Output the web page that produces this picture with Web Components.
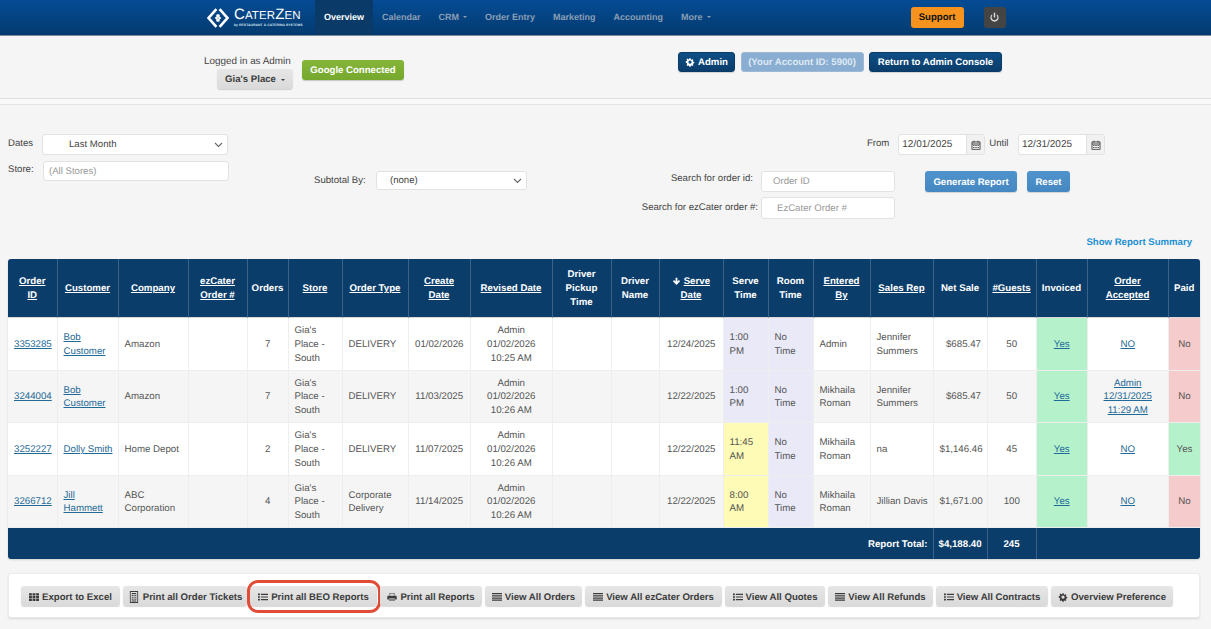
<!DOCTYPE html>
<html lang="en"><head><meta charset="utf-8"><title>CaterZen Overview</title>
<style>
html,body{margin:0;padding:0;background:#f5f5f5;font:9.8px/13.75px "Liberation Sans",Arial,sans-serif;color:#555;overflow:hidden;text-rendering:geometricPrecision}
body{height:629px}
</style></head><body>
<cz-navbar></cz-navbar>
<cz-account-bar></cz-account-bar>
<cz-filters></cz-filters>
<cz-report-table></cz-report-table>
<cz-action-bar></cz-action-bar>
<script>
const ICONS={
cog:'<path d="M6.7 1h2.6l.4 2 1.3.6 1.8-1.1 1.8 1.8-1.1 1.8.6 1.3 2 .4v2.6l-2 .4-.6 1.3 1.1 1.8-1.8 1.8-1.8-1.1-1.3.6-.4 2H6.7l-.4-2-1.3-.6-1.8 1.1-1.8-1.8 1.1-1.8L1.9 9.7l-2-.4V6.7l2-.4.6-1.3L1.4 3.2l1.8-1.8L5 2.5 6.3 3z" transform="translate(1.3 1.3) scale(.84)" fill-rule="evenodd"/><circle cx="8" cy="8" r="2.6" fill="var(--hole,#0d4a7f)"/>',
calendar:'<path d="M1.5 3h13v12h-13z" fill="none" stroke="currentColor" stroke-width="1.4"/><path d="M4 1h1.6v3.5H4zM10.4 1H12v3.5h-1.6zM1.5 5.5h13V7h-13z"/><path d="M3.5 8h2v1.6h-2zM7 8h2v1.6H7zM10.5 8h2v1.6h-2zM3.5 11h2v1.6h-2zM7 11h2v1.6H7zM10.5 11h2v1.6h-2z"/>',
th:'<path d="M0 2h4.6v3.4H0zM5.7 2h4.6v3.4H5.7zM11.4 2H16v3.4h-4.6zM0 6.4h4.6v3.4H0zM5.7 6.4h4.6v3.4H5.7zM11.4 6.4H16v3.4h-4.6zM0 10.8h4.6v3.4H0zM5.7 10.8h4.6v3.4H5.7zM11.4 10.8H16v3.4h-4.6z"/>',
list:'<path d="M0 2.5h3v2.6H0zM0 6.7h3v2.6H0zM0 10.9h3v2.6H0zM4.6 2.9H16v1.8H4.6zM4.6 7.1H16v1.8H4.6zM4.6 11.3H16v1.8H4.6z"/>',
bars:'<path d="M0 1.6h16v2H0zM0 5.1h16v2H0zM0 8.6h16v2H0zM0 12.1h16v2H0z"/>',
print:'<path d="M4 1.5h8v4H4zM5 2.5v3h6v-3z" fill-rule="evenodd"/><path d="M1.5 6h13a1 1 0 0 1 1 1v5h-3v-2h-9v2H.5V7a1 1 0 0 1 1-1z"/><path d="M4 10.8h8v3.7H4zM5 11.8v1.7h6v-1.7z" fill-rule="evenodd"/>',
ticket:'<path d="M2.5 0h11v16h-11zM3.6 1.2v13.6h8.8V1.2z" fill-rule="evenodd"/><path d="M5 2.5h6v1.5H5zM5 5h1.5v1.5H5zM7.3 5h1.5v1.5H7.3zM9.6 5h1.5v1.5H9.6zM5 7.5h1.5V9H5zM7.3 7.5h1.5V9H7.3zM9.6 7.5h1.5V9H9.6zM5 10h1.5v1.5H5zM7.3 10h1.5v1.5H7.3zM9.6 10h1.5v1.5H9.6zM5 12.5h6V14H5z"/>',
power:'<path d="M7 1h2v7H7z"/><path d="M4.6 3.1a6 6 0 1 0 6.8 0v2.3a4.1 4.1 0 1 1-6.8 0z"/>',
arrow:'<path d="M6.4 1.5h3.2v6.6l2.7-2.6 2.1 2.1L8 14 1.6 7.6l2.1-2.1 2.7 2.6z"/>'
};
customElements.define('cz-icon',class extends HTMLElement{connectedCallback(){
 const s=this.attachShadow({mode:'open'});const n=this.getAttribute('name');
 s.innerHTML=`<style>:host{display:inline-flex;width:var(--icon-size,10px);height:var(--icon-size,10px);vertical-align:-1.5px;flex:none}svg{width:100%;height:100%;fill:currentColor}</style><svg viewBox="0 0 16 16" aria-hidden="true">${ICONS[n]||''}</svg>`;
}});
customElements.define('cz-btn',class extends HTMLElement{connectedCallback(){
 const s=this.attachShadow({mode:'open'});
 s.innerHTML=`<style>
 :host{display:inline-flex;align-items:center;justify-content:center;gap:3px;box-sizing:border-box;height:20px;padding:1px 4px 0;border-radius:3px;font:bold 9.6px/13px "Liberation Sans",Arial,sans-serif;white-space:nowrap;flex:none;position:relative}
 :host([tone=grey]){background:linear-gradient(#e6e6e6,#dadada);color:#3c3c3c;box-shadow:0 1px 1px rgba(0,0,0,.16)}
 :host([tone=navy]){background:linear-gradient(#0e4e85,#0a3d6b);color:#fff;border:1px solid #0a3b68;box-shadow:0 1px 1px rgba(0,0,0,.15);--hole:#0d4a7f;padding-top:0}
 :host([tone=pale]){background:#8aaed2;color:#dfe9f3;border:1px solid #9db9d6;padding-top:0}
 :host([tone=green]){background:linear-gradient(#85b539,#76a82e);color:#fff;box-shadow:0 1px 1px rgba(0,0,0,.2);padding-top:0}
 :host([tone=blue]){background:linear-gradient(#4f93cd,#4588c1);color:#fff;box-shadow:0 1px 1px rgba(0,0,0,.15)}
 :host([tone=orange]){background:#f6931e;color:#111;padding-top:0}
 :host([tone=dark]){background:#444;color:#ddd;padding:0}
 :host([ring])::after{content:"";position:absolute;left:-3px;right:-4px;top:-6px;bottom:-7px;border:3px solid #e04c36;border-radius:11px;pointer-events:none}
 </style><slot></slot>`;
}});
customElements.define('cz-navbar',class extends HTMLElement{connectedCallback(){
 const s=this.attachShadow({mode:'open'});
 const items=[['Overview',0,1],['Calendar'],['CRM',1],['Order Entry'],['Marketing'],['Accounting'],['More',1]];
 s.innerHTML=`<style>
 :host{display:flex;box-sizing:border-box;height:36px;padding-left:207px;background:linear-gradient(#054b95,#033b6e);border-bottom:1px solid #7b8a99;font:bold 9px/14px "Liberation Sans",Arial,sans-serif}
 .logo{display:flex;align-items:center;gap:5px;width:108px;flex:none;color:#fff}
 .mark{width:22px;height:22px;flex:none}
 .word{display:flex;flex-direction:column;width:68px;font:400 11.5px/13px "Liberation Sans",Arial,sans-serif;letter-spacing:.1px;white-space:nowrap}
 .word b{font-weight:400;font-size:15px}
 .word small{font:bold 3.4px/4px "Liberation Sans",Arial,sans-serif;letter-spacing:.05px;color:#dfe8f1}
 nav{display:flex}
 a{display:flex;align-items:center;gap:3px;padding:0 9px 1px;color:#8b9fb4;white-space:nowrap}
 a.on{color:#fff;background:#0a3b68}
 i{width:0;height:0;border:2px solid transparent;border-top-color:currentColor;border-bottom:0;margin-left:1px}
 .right{display:flex;gap:20px;align-items:flex-start;padding-top:7px;margin-left:191px}
 </style>
 <div class="logo"><svg class="mark" viewBox="0 0 22 22" fill="none" stroke="#fff"><path d="M9.4 2.2 1.6 11l7.8 8.8" stroke-width="2.6"/><path d="M12.6 2.2l7.8 8.8-7.8 8.8" stroke-width="2.6"/><path d="M12.4 7.6 9 11l3.4 3.4M9.6 7.6 13 11l-3.4 3.4" stroke-width="1.8"/></svg>
 <div class="word"><span><b>C</b>ATER<b>Z</b>EN</span><small>by RESTAURANT &amp; CATERING SYSTEMS</small></div></div>
 <nav>${items.map(([t,c,on])=>`<a class="${on?'on':''}">${t}${c?'<i></i>':''}</a>`).join('')}</nav>
 <div class="right"><cz-btn tone="orange" style="width:53px;height:21px">Support</cz-btn><cz-btn tone="dark" style="width:22px;height:21px;--icon-size:11px"><cz-icon name="power"></cz-icon></cz-btn></div>`;
}});
customElements.define('cz-account-bar',class extends HTMLElement{connectedCallback(){
 const s=this.attachShadow({mode:'open'});
 s.innerHTML=`<style>
 :host{display:flex;box-sizing:border-box;height:69px;padding:16px 0 0 204px;background:linear-gradient(#f5f5f5 0,#f5f5f5 62px,#dedede 62px,#dedede 63px,#f9f9f9 63px,#f9f9f9 68px,#e4e4e4 68px);font:9.8px/14px "Liberation Sans",Arial,sans-serif;color:#444}
 .who{display:flex;flex-direction:column;margin-top:3px;width:89px;flex:none;font-size:9.9px;white-space:nowrap}
 .who cz-btn{margin:0 0 0 13px;width:76px}
 .gc{margin:8px 0 0 9px;width:102px}
 .ops{display:flex;gap:5.5px;margin-left:274px;align-items:flex-start}
 i{display:inline-block;width:0;height:0;border:2.5px solid transparent;border-top-color:currentColor;border-bottom:0;margin-left:2px;vertical-align:1.5px}
 </style>
 <div class="who"><span>Logged in as Admin</span><cz-btn tone="grey">Gia's Place<i></i></cz-btn></div>
 <cz-btn class="gc" tone="green">Google Connected</cz-btn>
 <div class="ops"><cz-btn tone="navy" style="width:57px"><cz-icon name="cog"></cz-icon>Admin</cz-btn><cz-btn tone="pale" style="width:123px">(Your Account ID: 5900)</cz-btn><cz-btn tone="navy" style="width:133px">Return to Admin Console</cz-btn></div>`;
}});
customElements.define('cz-filters',class extends HTMLElement{connectedCallback(){
 const s=this.attachShadow({mode:'open'});
 const chev='<svg width="9" height="6" viewBox="0 0 9 6" fill="none" stroke="#666" stroke-width="1.1"><path d="M1 1l3.5 3.5L8 1"/></svg>';
 const cal=v=>`<div class="date"><span>${v}</span><em><cz-icon name="calendar"></cz-icon></em></div>`;
 s.innerHTML=`<style>
 :host{display:block;height:154px;box-sizing:border-box;font:9.6px/14px "Liberation Sans",Arial,sans-serif;color:#444;white-space:nowrap}
 .top{display:flex;height:131px;padding-left:8px}
 .field{box-sizing:border-box;background:#fff;border:1px solid #e2e2e2;border-radius:3px;display:flex;align-items:center;justify-content:space-between;flex:none;padding-top:1px!important}
 .c1{width:221px;padding-top:29px;flex:none}
 .row{display:flex;align-items:center}
 .lab{position:relative;top:-1px}
 .ph{color:#999}
 .c2{margin-left:85px;padding-top:66px;flex:none}
 .c3{margin-left:115px;width:463px;flex:none;padding-top:29px}
 .dates{display:flex;justify-content:flex-end;align-items:center;height:21px}
 .date{display:flex;box-sizing:border-box;width:87px;height:21px;background:#fff;border:1px solid #e2e2e2;border-radius:3px;flex:none}
 .date span{flex:1;padding:3px 0 0 3px;font-size:10px}
 .date em{width:17px;background:#f1f1f1;border-left:1px solid #e2e2e2;display:flex;align-items:center;justify-content:center;color:#444;border-radius:0 3px 3px 0;--icon-size:10px}
 .search{display:flex;margin-top:16px}
 .labels{display:flex;flex-direction:column;align-items:flex-end;width:116px;flex:none}
 .labels span{display:flex;align-items:center;box-sizing:border-box}
 .inputs{margin-left:3px;width:134px;flex:none}
 .btns{display:flex;gap:10px;margin-left:30px;align-items:flex-start}
 .link{text-align:right;padding-right:19px;font-weight:bold;color:#1d90d2;line-height:14px;padding-top:0}
 </style>
 <div class="top">
  <div class="c1">
   <div class="row"><span class="lab" style="width:34px;flex:none">Dates</span><div class="field" style="width:186px;height:21px;padding:0 4px 0 26px"><span>Last Month</span>${chev}</div></div>
   <div class="row" style="margin-top:6px"><span class="lab" style="width:35px;flex:none">Store:</span><div class="field" style="width:186px;height:20px;padding:0 5px"><span class="ph">(All Stores)</span></div></div>
  </div>
  <div class="c2"><div class="row"><span class="lab" style="width:62px;flex:none;top:0">Subtotal By:</span><div class="field" style="width:151px;height:19px;padding:0 4px 0 13px"><span>(none)</span>${chev}</div></div></div>
  <div class="c3">
   <div class="dates"><span class="lab">From</span><span style="width:9px"></span>${cal('12/01/2025')}<span class="lab" style="margin:0 9.5px 0 4px">Until</span>${cal('12/31/2025')}</div>
   <div class="search">
    <div class="labels"><span style="height:21px;padding:0 5px 6px 0">Search for order id:</span><span style="height:22px;margin-top:5px">Search for ezCater order #:</span></div>
    <div class="inputs"><div class="field" style="height:21px;padding:0 11px"><span class="ph">Order ID</span></div><div class="field" style="height:22px;margin-top:5px;padding:0 15px"><span class="ph">EzCater Order #</span></div></div>
    <div class="btns"><cz-btn tone="blue" style="width:92px;height:21px">Generate Report</cz-btn><cz-btn tone="blue" style="width:43px;height:21px">Reset</cz-btn></div>
   </div>
  </div>
 </div>
 <div class="link">Show Report Summary</div>`;
}});
customElements.define('cz-report-table',class extends HTMLElement{connectedCallback(){
 const s=this.attachShadow({mode:'open'});
 const W=[49.5,61,70,59,41,54,66,62,82,59,48,64,45,45,57,63,54,49,51,81,31.5];
 const H=[['Order<br>ID',1],['Customer',1],['Company',1],['ezCater<br>Order #',1],['Orders'],['Store',1],['Order Type',1],['Create<br>Date',1],['Revised Date',1],['Driver<br>Pickup<br>Time'],['Driver<br>Name'],['SERVE',1],['Serve<br>Time'],['Room<br>Time'],['Entered<br>By',1],['Sales Rep',1],['Net Sale'],['#Guests',1],['Invoiced'],['Order<br>Accepted',1],['Paid']];
 const store="Gia's<br>Place -<br>South";
 const R=[
 ['3353285','Bob<br>Customer','Amazon','','7',store,'DELIVERY','01/02/2026','Admin<br>01/02/2026<br>10:25 AM','','','12/24/2025','1:00<br>PM','No<br>Time','Admin','Jennifer<br>Summers','$685.47','50','Yes','NO','No','l'],
 ['3244004','Bob<br>Customer','Amazon','','7',store,'DELIVERY','11/03/2025','Admin<br>01/02/2026<br>10:26 AM','','','12/22/2025','1:00<br>PM','No<br>Time','Mikhaila<br>Roman','Jennifer<br>Summers','$685.47','50','Yes','Admin<br>12/31/2025<br>11:29 AM','No','l'],
 ['3252227','Dolly Smith','Home Depot','','2',store,'DELIVERY','11/07/2025','Admin<br>01/02/2026<br>10:26 AM','','','12/22/2025','11:45<br>AM','No<br>Time','Mikhaila<br>Roman','na','$1,146.46','45','Yes','NO','Yes','y'],
 ['3266712','Jill<br>Hammett','ABC<br>Corporation','','4',store,'Corporate<br>Delivery','11/14/2025','Admin<br>01/02/2026<br>10:26 AM','','','12/22/2025','8:00<br>AM','No<br>Time','Mikhaila<br>Roman','Jillian Davis','$1,671.00','100','Yes','NO','No','y']];
 const align=['l','l','l','l','c','l','l','c','c','c','c','c','l','l','l','l','r','c','c','c','c'];
 const link=new Set([0,1,18,19]);
 s.innerHTML=`<style>
 :host{display:block;padding:0 11px 0 8px;font:9.7px/13.75px "Liberation Sans",Arial,sans-serif;color:#555}
 table{border-collapse:separate;border-spacing:0;table-layout:fixed;width:1192px;border-radius:3px;overflow:hidden;box-shadow:0 1px 2px rgba(0,0,0,.15)}
 th{background:#0b3d6b;color:#fff;font-weight:bold;height:59px;padding:2px 2px 0;box-sizing:border-box;text-align:center;border-right:1px solid #3b6389;border-bottom:1px solid #d8d8d8;vertical-align:middle}
 th:last-child,td:last-child{border-right:0}
 th u{text-decoration:underline}
 td{height:52.5px;box-sizing:border-box;padding:2px 5.5px 0 6px;border-right:1px solid #eee;border-bottom:1px solid #eee;background:#fff;vertical-align:middle;white-space:nowrap}
 tbody tr:nth-child(even) td{background:#f5f5f5}
 .l{text-align:left}.c{text-align:center}.r{text-align:right}
 a{color:#1f6a96;text-decoration:underline}
 tbody td.lav{background:#e9e9f7!important}
 tbody td.yel{background:#fdfbb6!important}
 tbody td.grn{background:#b5f2cc!important}
 tbody td.red{background:#f6cbcb!important}
 tfoot td{background:#0b3d6b;color:#fff;font-weight:bold;height:31px;border:0;border-right:1px solid #3b6389;padding:2px 5px 0}
 cz-icon{--icon-size:9px}
 </style>
 <table><colgroup>${W.map(w=>`<col style="width:${w}px">`).join('')}</colgroup>
 <thead><tr>${H.map(([t,u])=>t==='SERVE'?`<th><cz-icon name="arrow"></cz-icon> <u>Serve</u><br><u>Date</u></th>`:`<th>${u?t.split('<br>').map(x=>`<u>${x}</u>`).join('<br>'):t}</th>`).join('')}</tr></thead>
 <tbody>${R.map(r=>`<tr>${r.slice(0,21).map((v,i)=>{
   let c=align[i];
   if(i===12)c+=r[21]==='y'?' yel':' lav';
   if(i===13)c+=' lav';
   if(i===18)c+=' grn';
   if(i===20)c+=v==='Yes'?' grn':' red';
   return `<td class="${c}">${link.has(i)?`<a>${v}</a>`:v}</td>`}).join('')}</tr>`).join('')}</tbody>
 <tfoot><tr><td colspan="16" class="r">Report Total:</td><td class="r">$4,188.40</td><td class="c">245</td><td colspan="3"></td></tr></tfoot>
 </table>`;
}});
customElements.define('cz-action-bar',class extends HTMLElement{connectedCallback(){
 const s=this.attachShadow({mode:'open'});
 const B=[['th','Export to Excel',99],['ticket','Print all Order Tickets',124],['list','Print all BEO Reports',127],['print','Print all Reports',102],['bars','View All Orders',97],['bars','View All ezCater Orders',137],['list','View All Quotes',100],['bars','View All Refunds',105],['list','View All Contracts',112],['cog','Overview Preference',122]];
 s.innerHTML=`<style>
 :host{display:flex;gap:3px;box-sizing:border-box;width:1192px;height:45px;margin:14px 0 0 8px;padding:12px;background:#fff;border:1px solid #ececec;border-radius:3px;box-shadow:0 1px 2px rgba(0,0,0,.12);--hole:#dedede}
 cz-btn{padding-top:2px}
 </style>${B.map(([i,t,w])=>`<cz-btn tone="grey" ${t.includes('BEO')?'ring':''} style="width:${w}px"><cz-icon name="${i}" ${i==='ticket'?'style="--icon-size:12px"':''}></cz-icon>${t}</cz-btn>`).join('')}`;
}});
</script>
</body></html>
